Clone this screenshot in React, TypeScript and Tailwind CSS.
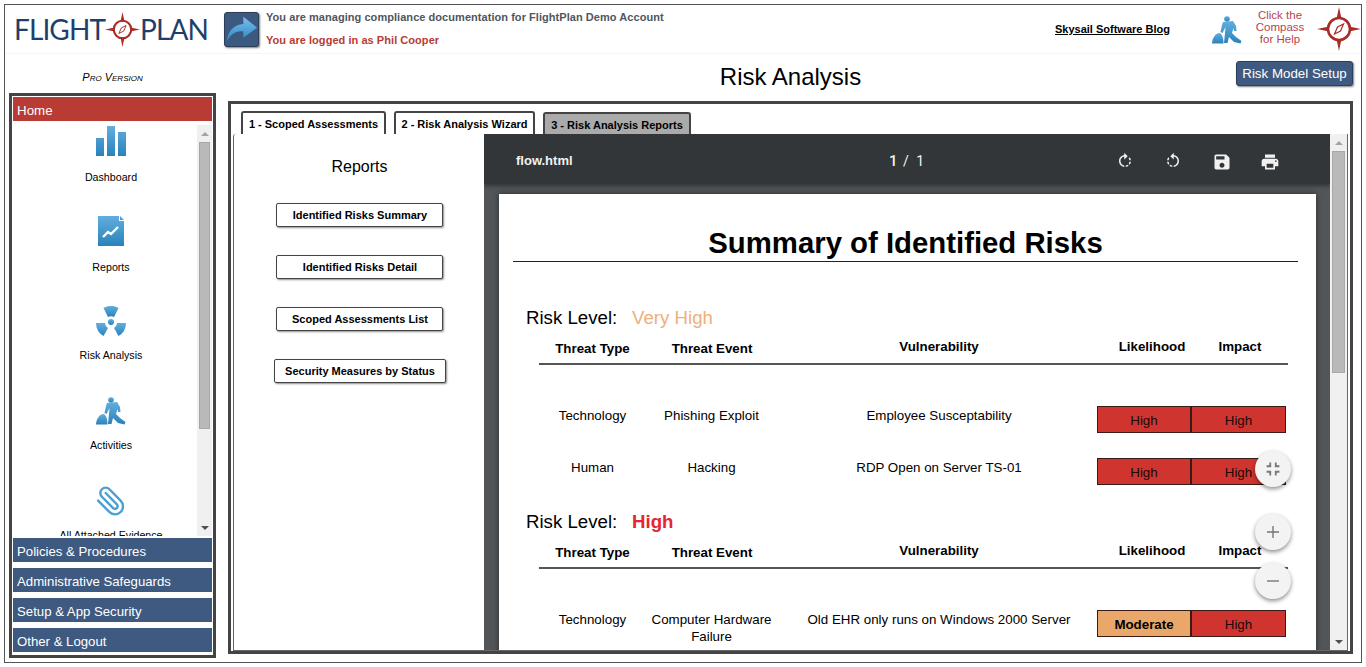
import { Paperclip } from "lucide-react";

const navItems = ["Policies & Procedures", "Administrative Safeguards", "Setup & App Security", "Other & Logout"];
const reportButtons = ["Identified Risks Summary", "Identified Risks Detail", "Scoped Assessments List", "Security Measures by Status"];

function Compass({ size, className }: { size: number; className?: string }) {
  return (
    <svg width={size} height={size} viewBox="-22 -22 44 44" className={className}>
      <circle cx="0" cy="0" r="11" fill="none" stroke="#a92c26" strokeWidth="2.6" />
      <path d="M-2.5 -10 L0 -22 L2.5 -10 Z M-2.5 10 L0 22 L2.5 10 Z M-10 -2.5 L-22 0 L-10 2.5 Z M10 -2.5 L22 0 L10 2.5 Z" fill="#a92c26" />
      <path d="M4.5 -5 L1.5 2 L-4.5 5 L-1.5 -2 Z" fill="none" stroke="#a92c26" strokeWidth="1.2" />
    </svg>
  );
}

function Worker({ id, width, height }: { id: string; width: number; height: number }) {
  return (
    <svg width={width} height={height} viewBox="0 0 30 28">
      <defs>
        <linearGradient id={id} x1="0" y1="0" x2="0" y2="1">
          <stop offset="0" stopColor="#62aede" />
          <stop offset="1" stopColor="#2a82bb" />
        </linearGradient>
      </defs>
      <g fill={`url(#${id})`}>
        <circle cx="15" cy="3" r="2.8" />
        <path d="M11 6 L21 5 L24 10 L24.5 15 L22 15 L21.5 12 L20 17 L24 21 L29.5 25 L28.5 27.5 L22 26 L17 21 L15.5 27 L12 27 L13 17 L13.5 11 L10.5 17 L8.5 16 L10 9 Z" />
        <path d="M0 27.5 C0 22 4 17 7.5 17 C10.5 18 11.5 23 11.5 27.5 Z" />
      </g>
    </svg>
  );
}

function SideIcon({ name }: { name: string }) {
  if (name === "Dashboard") {
    return (
      <svg width="30" height="30" viewBox="0 0 30 30">
        <defs>
          <linearGradient id="barGrad" x1="0" y1="0" x2="0" y2="1">
            <stop offset="0" stopColor="#62aede" />
            <stop offset="1" stopColor="#2a82bb" />
          </linearGradient>
        </defs>
        <path d="M0 12 H8 V30 H0 Z M11 0 H19 V30 H11 Z M22 6 H30 V30 H22 Z" fill="url(#barGrad)" />
      </svg>
    );
  }
  if (name === "Reports") {
    return (
      <svg width="26" height="30" viewBox="0 0 26 30">
        <defs>
          <linearGradient id="docGrad" x1="0" y1="0" x2="0" y2="1">
            <stop offset="0" stopColor="#62aede" />
            <stop offset="1" stopColor="#2a82bb" />
          </linearGradient>
        </defs>
        <path d="M0 0 H21 V5 H26 V30 H0 Z" fill="url(#docGrad)" />
        <path d="M22 0 L26 4 H22 Z" fill="#4b9fd6" />
        <path d="M5 21 L10 16 L13 18 L20 11" fill="none" stroke="#fff" strokeWidth="2.4" />
      </svg>
    );
  }
  if (name === "Risk Analysis") {
    return (
      <svg width="30" height="30" viewBox="0 0 30 30">
        <defs>
          <linearGradient id="riskGrad" x1="0" y1="0" x2="0" y2="1">
            <stop offset="0" stopColor="#62aede" />
            <stop offset="1" stopColor="#2a82bb" />
          </linearGradient>
        </defs>
        <g fill="url(#riskGrad)">
          <path d="M7.5 2 A15 15 0 0 1 22.5 2 L18 11 A6 6 0 0 0 12 11 Z" />
          <path d="M30 17 A15 15 0 0 1 22.5 30 L18 22 A6 6 0 0 0 21 17 Z" />
          <path d="M0 17 A15 15 0 0 0 7.5 30 L12 22 A6 6 0 0 1 9 17 Z" />
          <circle cx="15" cy="16" r="3" />
        </g>
      </svg>
    );
  }
  if (name === "Activities") {
    return <Worker id="workerSide" width={30} height={28} />;
  }
  return <Paperclip size={32} strokeWidth={1.8} color="#4a9fd4" className="-scale-x-100" />;
}

function Arrow({ dir }: { dir: "up" | "down" }) {
  return (
    <div className="h-[17px] flex items-center justify-center">
      <div
        className={
          dir === "up"
            ? "w-0 h-0 border-x-[4px] border-x-transparent border-b-[4px] border-b-[#a3a3a3]"
            : "w-0 h-0 border-x-[4px] border-x-transparent border-t-[4px] border-t-[#505050]"
        }
      />
    </div>
  );
}

function Scrollbar({ thumb, className }: { thumb: number; className: string }) {
  return (
    <div className={`flex flex-col bg-[#f0f0f0] ${className}`}>
      <Arrow dir="up" />
      <div className="flex-1 px-[2px]">
        <div className="bg-[#b9b9b9] border border-[#a8a8a8]" style={{ height: thumb }} />
      </div>
      <Arrow dir="down" />
    </div>
  );
}

function RateCell({ label }: { label: string }) {
  const moderate = label === "Moderate";
  return (
    <div
      className={`h-[27px] border border-[#3a1a16] flex items-center justify-center text-[#1a0a0a] pt-[2px] ${
        moderate ? "bg-[#e9a76a] font-bold text-black" : "bg-[#d0342f]"
      }`}
    >
      {label}
    </div>
  );
}

function RiskRow({ type, event, vuln, likelihood, impact }: { type: string; event: string; vuln: string; likelihood: string; impact: string }) {
  return (
    <div className="grid grid-cols-[107px_131px_320px_94px_95px] h-[52px] leading-[17px] items-start">
      <div className="text-center pt-px">{type}</div>
      <div className="text-center pt-px px-[5px]">{event}</div>
      <div className="text-center pt-px pl-1">{vuln}</div>
      <RateCell label={likelihood} />
      <RateCell label={impact} />
    </div>
  );
}

function TableHead() {
  return (
    <div className="grid grid-cols-[107px_131px_320px_94px_95px] h-[36px] w-[749px] border-b-2 border-[#555] font-bold leading-[16px]">
      <div className="text-center pt-3">Threat Type</div>
      <div className="text-center pt-3 pl-px">Threat Event</div>
      <div className="text-center pt-[10px] pl-1">Vulnerability</div>
      <div className="text-center pt-[10px] pl-4">Likelihood</div>
      <div className="text-center pt-[10px] pl-[3px]">Impact</div>
    </div>
  );
}

function Fab({ children, top }: { children: React.ReactNode; top: string }) {
  return (
    <div className={`absolute left-[771px] ${top} w-9 h-9 rounded-full bg-[#f3f3f3] shadow-[0_2px_4px_rgba(0,0,0,0.45)] flex items-center justify-center`}>
      {children}
    </div>
  );
}

export default function App() {
  return (
    <div className="h-[667px] p-1 bg-white font-['Liberation_Sans',Arial,sans-serif] text-black overflow-hidden">
      <div className="h-[659px] w-[1358px] border border-[#555] flex flex-col">
        {/* header */}
        <div className="h-12 flex items-center shrink-0">
          <div className="w-[219px] pl-[9px] flex items-center text-[#1f3f6b] text-[28px] tracking-[-0.9px] leading-none font-['Lato',sans-serif]">
            <span>FLIGHT</span>
            <Compass size={35} className="shrink-0" />
            <span>PLAN</span>
          </div>
          <div className="w-[35px] h-[35px] rounded-[3px] bg-[#3c5a80] border border-[#2d3f58] shadow-[1px_1px_2px_rgba(0,0,0,0.5)] shrink-0">
            <svg width="33" height="33" viewBox="0 0 36 36">
              <defs>
                <linearGradient id="arrowGrad" x1="0" y1="0" x2="0" y2="1">
                  <stop offset="0" stopColor="#7cc0ec" />
                  <stop offset="1" stopColor="#2a86c6" />
                </linearGradient>
              </defs>
              <path d="M2 31 C3 19 10 13 20 12 L20 4 L35 16 L20 27 L20 20 C12 19 6 23 2 31 Z" fill="url(#arrowGrad)" />
            </svg>
          </div>
          <div className="ml-[7px] w-[789px] pb-[2px] text-[11px] font-bold tracking-[0.05px] leading-[14px]">
            <div className="text-[#50565e] mb-[9px]">You are managing compliance documentation for FlightPlan Demo Account</div>
            <div className="text-[#b83c34]">You are logged in as Phil Cooper</div>
          </div>
          <a className="text-[11px] font-bold underline w-[157px]">Skysail Software Blog</a>
          <div className="mt-[2px] leading-none">
            <Worker id="workerTop" width={30} height={28} />
          </div>
          <div className="w-[75px] pb-[4px] pl-[1px] text-center text-[11.5px] leading-3 text-[#b8434f]">
            Click the
            <br />
            Compass
            <br />
            for Help
          </div>
          <Compass size={44} />
        </div>

        {/* body */}
        <div className="flex-1 flex pl-1 min-h-0 border-t border-[#f6f6f6]">
          <div className="w-[207px] shrink-0">
            <div className="h-[39px] pt-[15px] text-center text-[11px] leading-4 italic font-medium [font-variant:small-caps]">Pro Version</div>
            <div className="h-[565px] border-[3px] border-[#444] p-px flex flex-col">
              <div className="h-6 shrink-0 bg-[#b83c34] text-white text-[13.33px] leading-7 pl-1">Home</div>
              <div className="h-[411px] mt-1 flex shrink-0">
                <div className="flex-1 overflow-hidden pl-3">
                  {["Dashboard", "Reports", "Risk Analysis", "Activities", "All Attached Evidence"].map((name, i) => (
                    <div key={name} className="h-[90px] pt-px flex flex-col items-center text-[10.67px]">
                      <div className="h-[30px] flex items-center justify-center">
                        <SideIcon name={name} />
                      </div>
                      <div className={i < 2 ? "mt-[14px] leading-[14px]" : "mt-3 leading-[14px]"}>{name}</div>
                    </div>
                  ))}
                </div>
                <Scrollbar thumb={287} className="w-[15px] shrink-0" />
              </div>
              <div className="flex flex-col gap-[6px] mt-[2px]">
                {navItems.map((item) => (
                  <div key={item} className="h-6 bg-[#3f5a80] text-white text-[13.2px] leading-7 pl-1">
                    {item}
                  </div>
                ))}
              </div>
            </div>
          </div>

          <div className="w-[1125px] ml-3 shrink-0">
            <div className="h-[47px] grid grid-cols-[1fr_auto_1fr]">
              <div />
              <div className="text-2xl leading-[46px]">Risk Analysis</div>
              <div className="justify-self-end mt-[7px] w-[117px] h-[25px] bg-[#3f5a80] border border-[#2d3f58] rounded-[3px] shadow-[1px_1px_2px_rgba(0,0,0,0.5)] text-white text-[13.33px] text-center leading-[23px]">
                Risk Model Setup
              </div>
            </div>

            <div className="h-[553px] border-[3px] border-[#444] flex flex-col">
              <div className="h-[30px] shrink-0 pl-[10px] pt-[7px] flex gap-2 text-[11px] font-bold">
                <div className="w-[145px] h-[23px] border-2 border-b-0 border-[#444] rounded-t-[3px] bg-white text-center leading-[22px]">1 - Scoped Assessments</div>
                <div className="w-[141px] h-[23px] border-2 border-b-0 border-[#444] rounded-t-[3px] bg-white text-center leading-[22px]">2 - Risk Analysis Wizard</div>
                <div className="w-[148px] h-[22px] mt-px border-2 border-b-0 border-[#444] rounded-t-[3px] bg-[#aaa] text-center leading-[22px]">3 - Risk Analysis Reports</div>
              </div>

              <div className="flex-1 min-h-0 mx-[2px] flex border border-t-0 border-[#666] rounded-tl-[3px]">
                <div className="w-[250px] shrink-0 pl-[2px] flex flex-col items-center">
                  <div className="mt-[23px] mb-[26px] text-base leading-5 pr-[1px]">Reports</div>
                  <div className="flex flex-col gap-7 items-center">
                    {reportButtons.map((label) => (
                      <div key={label} className="min-w-[167px] px-[10px] h-6 border border-[#444] rounded-[2px] bg-white shadow-[1px_1px_2px_rgba(0,0,0,0.45)] text-[11px] font-bold text-center leading-[23px]">
                        {label}
                      </div>
                    ))}
                  </div>
                </div>

                <div className="w-[846px] shrink-0 relative overflow-hidden bg-[#525659] flex flex-col">
                  <div className="h-[50px] shrink-0 pt-[5px] bg-[#323639] shadow-[0_2px_4px_rgba(0,0,0,0.4)] flex items-center text-white">
                    <div className="w-[405px] pl-8 pb-[2px] text-[13px] font-bold text-[#f1f1f1]">flow.html</div>
                    <div className="w-[227px] text-[#f1f1f1] font-['Roboto',sans-serif] text-[14px] tracking-[0.5px]">
                      <span className="text-[15px] font-medium">1</span>
                      <span className="ml-[5px]">/</span>
                      <span className="ml-[7px]">1</span>
                    </div>
                    <div className="flex gap-[30px] text-[#f1f1f1]">
                      <svg width="18" height="18" viewBox="0 0 24 24" fill="currentColor">
                        <path d="M15.55 5.55L11 1v3.07C7.06 4.56 4 7.92 4 12s3.05 7.44 7 7.93v-2.02c-2.84-.48-5-2.94-5-5.91s2.16-5.43 5-5.91V10l4.55-4.45zM19.93 11c-.17-1.39-.72-2.73-1.62-3.89l-1.42 1.42c.54.75.88 1.6 1.02 2.47h2.02zM13 17.9v2.02c1.39-.17 2.74-.71 3.9-1.61l-1.44-1.44c-.75.54-1.59.89-2.46 1.03zm3.89-2.42l1.42 1.41c.9-1.16 1.45-2.5 1.62-3.89h-2.02c-.14.87-.48 1.72-1.02 2.48z" />
                      </svg>
                      <svg width="18" height="18" viewBox="0 0 24 24" fill="currentColor" className="-scale-x-100">
                        <path d="M15.55 5.55L11 1v3.07C7.06 4.56 4 7.92 4 12s3.05 7.44 7 7.93v-2.02c-2.84-.48-5-2.94-5-5.91s2.16-5.43 5-5.91V10l4.55-4.45zM19.93 11c-.17-1.39-.72-2.73-1.62-3.89l-1.42 1.42c.54.75.88 1.6 1.02 2.47h2.02zM13 17.9v2.02c1.39-.17 2.74-.71 3.9-1.61l-1.44-1.44c-.75.54-1.59.89-2.46 1.03zm3.89-2.42l1.42 1.41c.9-1.16 1.45-2.5 1.62-3.89h-2.02c-.14.87-.48 1.72-1.02 2.48z" />
                      </svg>
                      <svg width="20" height="20" viewBox="0 0 24 24" fill="currentColor">
                        <path d="M17 3H5c-1.11 0-2 .9-2 2v14c0 1.1.89 2 2 2h14c1.1 0 2-.9 2-2V7l-4-4zm-5 16c-1.66 0-3-1.34-3-3s1.34-3 3-3 3 1.34 3 3-1.34 3-3 3zm3-10H5V5h10v4z" />
                      </svg>
                      <svg width="20" height="20" viewBox="0 0 24 24" fill="currentColor" className="-ml-[2px]">
                        <path d="M19 8H5c-1.66 0-3 1.34-3 3v6h4v4h12v-4h4v-6c0-1.66-1.34-3-3-3zm-3 11H8v-5h8v5zm3-7c-.55 0-1-.45-1-1s.45-1 1-1 1 .45 1 1-.45 1-1 1zm-1-9H6v4h12V3z" />
                      </svg>
                    </div>
                  </div>

                  {/* pdf page */}
                  <div className="mt-[10px] ml-[15px] w-[817px] flex-1 bg-white shadow-[0_0_6px_rgba(0,0,0,0.5)] text-[13.33px]">
                    <div className="ml-[14px] w-[785px] pt-8 pb-[1px] border-b-[1.5px] border-[#222] text-center text-[29.33px] leading-[34px] font-bold">
                      Summary of Identified Risks
                    </div>

                    <div className="mt-[45px] ml-[27px] text-[18.67px] leading-[22px] flex">
                      <span className="w-[106px]">Risk Level:</span>
                      <span className="text-[#efaf7b]">Very High</span>
                    </div>
                    <div className="ml-10">
                      <TableHead />
                      <div className="mt-[41px]">
                        <RiskRow type="Technology" event="Phishing Exploit" vuln="Employee Susceptability" likelihood="High" impact="High" />
                        <RiskRow type="Human" event="Hacking" vuln="RDP Open on Server TS-01" likelihood="High" impact="High" />
                      </div>
                    </div>

                    <div className="mt-px ml-[27px] text-[18.67px] leading-[22px] flex">
                      <span className="w-[106px]">Risk Level:</span>
                      <span className="text-[#e8242f] font-bold">High</span>
                    </div>
                    <div className="ml-10">
                      <TableHead />
                      <div className="mt-[41px]">
                        <RiskRow type="Technology" event="Computer Hardware Failure" vuln="Old EHR only runs on Windows 2000 Server" likelihood="Moderate" impact="High" />
                      </div>
                    </div>
                  </div>

                  <Fab top="top-[317px]">
                    <svg width="22" height="22" viewBox="0 0 24 24" fill="#777">
                      <path d="M5 16h3v3h2v-5H5v2zm3-8H5v2h5V5H8v3zm6 11h2v-3h3v-2h-5v5zm2-11V5h-2v5h5V8h-3z" />
                    </svg>
                  </Fab>
                  <Fab top="top-[380px]">
                    <svg width="14" height="14" viewBox="0 0 14 14" stroke="#777" strokeWidth="1.4">
                      <path d="M7 1V13M1 7H13" />
                    </svg>
                  </Fab>
                  <Fab top="top-[429px]">
                    <svg width="14" height="14" viewBox="0 0 14 14" stroke="#777" strokeWidth="1.4">
                      <path d="M1 7H13" />
                    </svg>
                  </Fab>
                </div>

                <Scrollbar thumb={222} className="w-[17px] shrink-0" />
              </div>
            </div>
          </div>
        </div>
      </div>
    </div>
  );
}
